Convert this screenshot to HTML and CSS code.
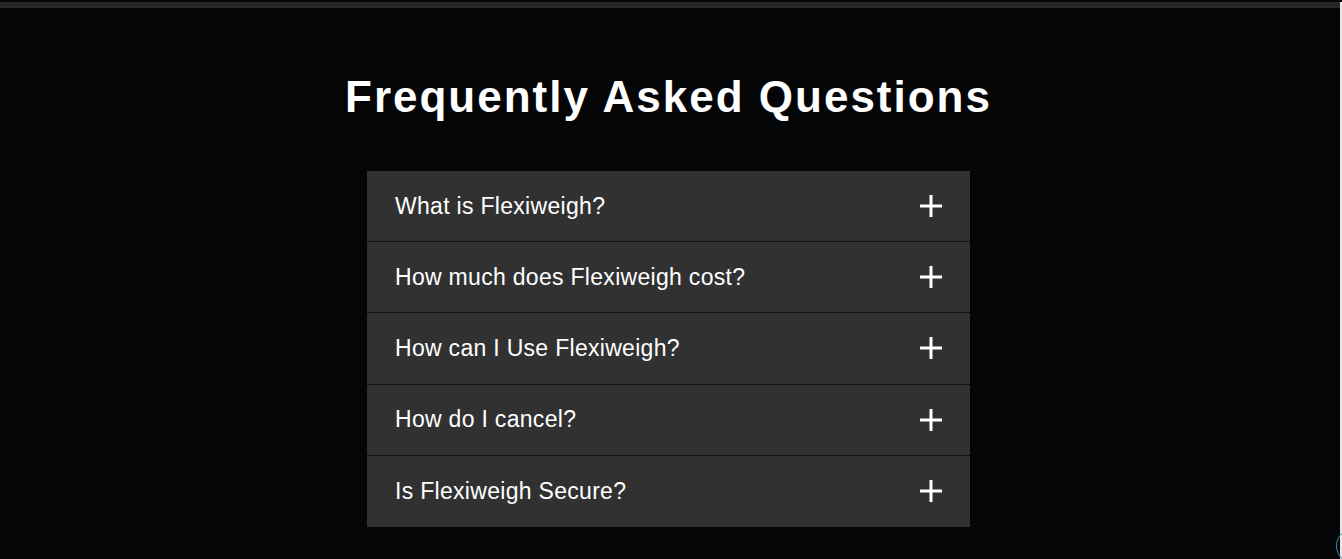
FILE: index.html
```html
<!DOCTYPE html>
<html lang="en">
<head>
<meta charset="utf-8">
<title>FAQ</title>
<link rel="stylesheet" href="styles.css">
</head>
<body>
<div class="page">
  <div class="topbar"></div>
  <main class="faq">
    <h1 class="faq-title">Frequently Asked Questions</h1>
    <ul class="faq-list">
      <li class="faq-item"><span class="faq-q">What is Flexiweigh?</span><svg class="plus" viewBox="0 0 22 22" width="22" height="22"><path d="M11 0V22M0 11H22" stroke="#fff" stroke-width="3"/></svg></li>
      <li class="faq-item"><span class="faq-q">How much does Flexiweigh cost?</span><svg class="plus" viewBox="0 0 22 22" width="22" height="22"><path d="M11 0V22M0 11H22" stroke="#fff" stroke-width="3"/></svg></li>
      <li class="faq-item"><span class="faq-q">How can I Use Flexiweigh?</span><svg class="plus" viewBox="0 0 22 22" width="22" height="22"><path d="M11 0V22M0 11H22" stroke="#fff" stroke-width="3"/></svg></li>
      <li class="faq-item"><span class="faq-q">How do I cancel?</span><svg class="plus" viewBox="0 0 22 22" width="22" height="22"><path d="M11 0V22M0 11H22" stroke="#fff" stroke-width="3"/></svg></li>
      <li class="faq-item"><span class="faq-q">Is Flexiweigh Secure?</span><svg class="plus" viewBox="0 0 22 22" width="22" height="22"><path d="M11 0V22M0 11H22" stroke="#fff" stroke-width="3"/></svg></li>
    </ul>
  </main>
  <div class="edge"></div>
  <div class="to-top"></div>
</div>
</body>
</html>
```
FILE: styles.css
```css
html, body {
  margin: 0;
  padding: 0;
  background: #040507;
  height: 100%;
  overflow: hidden;
}
.page {
  position: relative;
  height: 559px;
  font-family: "Liberation Sans", Arial, sans-serif;
  color: #fff;
}
.topbar {
  margin-top: 2px;
  height: 6px;
  background: #262626;
}
.faq {
  display: flex;
  flex-direction: column;
  align-items: center;
  padding-right: 5px;
}
.faq-title {
  margin: 64px 0 0;
  font-size: 44px;
  font-weight: 700;
  letter-spacing: 2px;
  line-height: 50px;
}
.faq-list {
  list-style: none;
  margin: 49px 0 0;
  padding: 0;
  width: 603px;
}
.faq-item {
  display: flex;
  align-items: center;
  justify-content: space-between;
  height: 71.2px;
  padding: 0 28px;
  background: #313131;
  border-bottom: 1px solid #111;
  box-sizing: border-box;
}
.faq-item:last-child {
  border-bottom: none;
}
.faq-q {
  font-size: 23px;
  letter-spacing: 0.3px;
}
.plus {
  display: block;
}
.edge {
  position: absolute;
  top: 0;
  right: 0;
  width: 2px;
  height: 100%;
  background: #e8e8e8;
}
.to-top {
  position: absolute;
  left: 1336px;
  top: 526px;
  width: 36px;
  height: 36px;
  border: 1px solid #3f8fa8;
  border-radius: 50%;
  box-sizing: border-box;
}
```
